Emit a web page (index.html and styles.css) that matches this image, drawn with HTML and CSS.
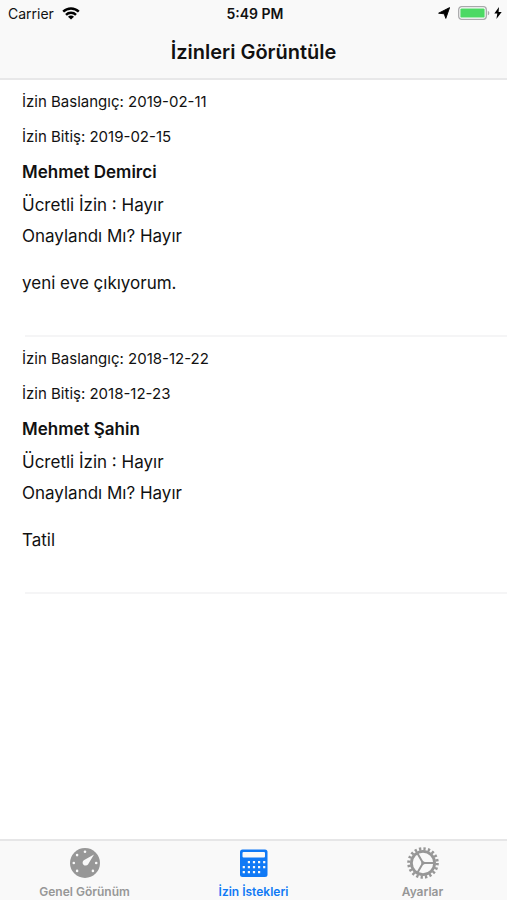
FILE: index.html
```html
<!DOCTYPE html>
<html lang="tr">
<head>
    <meta charset="UTF-8">
    <meta name="viewport" content="width=device-width, initial-scale=1.0">
    <title>İzinleri Görüntüle</title>
    <link rel="stylesheet" href="styles.css">
</head>
<body>
    <header class="top-bar">
        <div class="status-bar">
            <div class="status-left">
                <span>Carrier</span>
                <svg width="18" height="13" viewBox="0 0 18 13" fill="none" stroke="#000" stroke-width="2.4">
                    <path d="M1.2 4.7a11 11 0 0 1 15.6 0"/>
                    <path d="M4 7.8a7 7 0 0 1 10 0"/>
                    <path d="M9 12.6L6 9.7a4.2 4.2 0 0 1 6 0z" fill="#000" stroke="none"/>
                </svg>
            </div>
            <span class="status-time">5:49 PM</span>
            <div class="status-right">
                <svg width="12" height="12" viewBox="0 0 12 12">
                    <path d="M11.6.6L7.8 11.4 6.2 6.8.6 6.2z" stroke="#000" stroke-width=".9" stroke-linejoin="round"/>
                </svg>
                <svg width="32" height="14" viewBox="0 0 32 14">
                    <rect x=".7" y=".7" width="27.6" height="12.6" rx="3" fill="#fff" stroke="#a9a9ab" stroke-width="1.3"/>
                    <rect x="2.4" y="2.4" width="24.2" height="9.2" rx="1.2" fill="#4cd964"/>
                    <path d="M29.8 4.7c2 .8 2 3.8 0 4.6z" fill="#a9a9ab"/>
                </svg>
                <svg width="8" height="12" viewBox="0 0 8 12">
                    <path d="M5 0L.3 6.6h3L2.4 12 7.7 5H4.6z"/>
                </svg>
            </div>
        </div>
        <h1>İzinleri Görüntüle</h1>
    </header>

    <main class="leave-list">
        <article class="leave">
            <p class="leave-date">İzin Baslangıç: 2019-02-11</p>
            <p class="leave-date">İzin Bitiş: 2019-02-15</p>
            <h2>Mehmet Demirci</h2>
            <p class="leave-info">Ücretli İzin : Hayır</p>
            <p class="leave-info">Onaylandı Mı? Hayır</p>
            <p class="leave-reason">yeni eve çıkıyorum.</p>
        </article>
        <article class="leave">
            <p class="leave-date">İzin Baslangıç: 2018-12-22</p>
            <p class="leave-date">İzin Bitiş: 2018-12-23</p>
            <h2>Mehmet Şahin</h2>
            <p class="leave-info">Ücretli İzin : Hayır</p>
            <p class="leave-info">Onaylandı Mı? Hayır</p>
            <p class="leave-reason">Tatil</p>
        </article>
    </main>

    <nav class="tab-bar">
        <a class="tab" href="#">
            <svg width="32" height="32" viewBox="0 0 32 32">
                <circle cx="16" cy="16" r="15" fill="#979797"/>
                <g fill="#f9f9f9">
                    <circle cx="4.8" cy="16" r="1.3"/>
                    <circle cx="8.1" cy="8.1" r="1.3"/>
                    <circle cx="16" cy="4.8" r="1.3"/>
                    <circle cx="27.2" cy="16" r="1.3"/>
                    <circle cx="8.1" cy="23.9" r="1.3"/>
                    <circle cx="23.9" cy="23.9" r="1.3"/>
                    <path d="M25 7.6l-6 9.8a3 3 0 1 1-4.2-4.2z"/>
                </g>
            </svg>
            <span>Genel Görünüm</span>
        </a>
        <a class="tab active" href="#">
            <svg width="32" height="32" viewBox="0 0 32 32">
                <rect x="2" y="2.5" width="27.5" height="27.5" rx="2.5" fill="#1079f5"/>
                <rect x="4.5" y="5" width="22.5" height="5.5" rx="1" fill="#f9f9f9"/>
                <g stroke="#f9f9f9" stroke-width="2.2" stroke-dasharray="2.2 2.9">
                    <path d="M9.8 15.2h17.6"/>
                    <path d="M4.7 20.2h22.7"/>
                    <path d="M4.7 25.2h17.6"/>
                </g>
            </svg>
            <span>İzin İstekleri</span>
        </a>
        <a class="tab" href="#">
            <svg width="32" height="32" viewBox="0 0 32 32" fill="none" stroke="#979797">
                <circle cx="16" cy="16" r="14.2" stroke-width="3.2" stroke-dasharray="2.3 2.16"/>
                <circle cx="16" cy="16" r="11.6" stroke-width="2.8"/>
                <path d="M16 16h11M16 16L10.4 6.3M16 16l-5.6 9.7" stroke-width="2"/>
                <circle cx="16" cy="16" r="1.8" fill="#979797" stroke="none"/>
            </svg>
            <span>Ayarlar</span>
        </a>
    </nav>
</body>
</html>
```

FILE: styles.css
```css
* {
    margin: 0;
    padding: 0;
    box-sizing: border-box;
}

body {
    font-family: Inter, "Liberation Sans", sans-serif;
    background: #fff;
    color: #111;
    min-height: 100vh;
    display: flex;
    flex-direction: column;
}

svg {
    display: block;
}

.top-bar {
    background: #f9f9f9;
    border-bottom: 2px solid #e8e8e9;
}

.status-bar {
    display: grid;
    grid-template-columns: 1fr auto 1fr;
    align-items: center;
    height: 26px;
    padding: 0 5px 0 8px;
    font-size: 14px;
}

.status-left,
.status-right {
    display: flex;
    align-items: center;
    gap: 8px;
}

.status-right {
    justify-content: flex-end;
    gap: 4px;
}

.status-right svg:first-child {
    margin-right: 4px;
}

.status-time {
    font-weight: 600;
}

h1 {
    font-size: 20px;
    font-weight: 600;
    line-height: 52px;
    text-align: center;
}

.leave-list {
    flex: 1;
}

.leave {
    position: relative;
    padding: 12px 22px 44px;
    line-height: 20px;
}

/* separador con margen izquierdo */
.leave::after {
    content: "";
    position: absolute;
    left: 25px;
    right: 0;
    bottom: 0;
    height: 2px;
    background: #f5f5f6;
}

.leave-date {
    margin-bottom: 15px;
    font-size: 15px;
}

.leave h2 {
    margin-bottom: 13px;
    font-size: 17px;
    font-weight: 600;
}

.leave-info {
    margin-bottom: 11px;
    font-size: 17px;
}

.leave-reason {
    margin-top: 27px;
    font-size: 17px;
}

.tab-bar {
    display: flex;
    height: 61px;
    padding-top: 6px;
    background: #f9f9f9;
    border-top: 2px solid #e6e6e7;
}

.tab {
    flex: 1;
    display: flex;
    flex-direction: column;
    align-items: center;
    gap: 5px;
    color: #979797;
    font-size: 12px;
    font-weight: 600;
    line-height: 16px;
    text-decoration: none;
}

.tab.active {
    color: #1079f5;
}
```
